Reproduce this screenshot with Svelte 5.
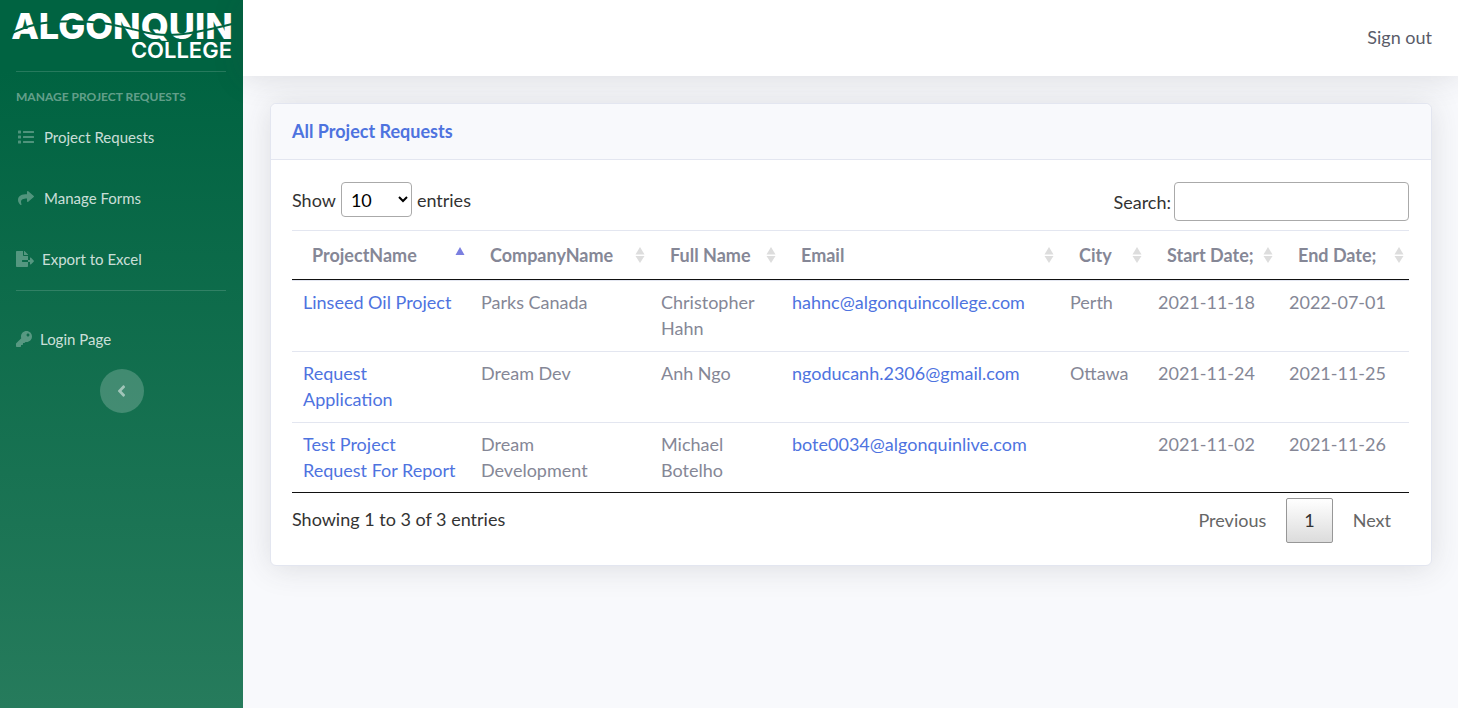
<script>
  const icons = {
    list: { w: 512, d: 'M80 368H16a16 16 0 0 0-16 16v64a16 16 0 0 0 16 16h64a16 16 0 0 0 16-16v-64a16 16 0 0 0-16-16zm0-320H16A16 16 0 0 0 0 64v64a16 16 0 0 0 16 16h64a16 16 0 0 0 16-16V64a16 16 0 0 0-16-16zm0 160H16a16 16 0 0 0-16 16v64a16 16 0 0 0 16 16h64a16 16 0 0 0 16-16v-64a16 16 0 0 0-16-16zm416 176H176a16 16 0 0 0-16 16v32a16 16 0 0 0 16 16h320a16 16 0 0 0 16-16v-32a16 16 0 0 0-16-16zm0-320H176a16 16 0 0 0-16 16v32a16 16 0 0 0 16 16h320a16 16 0 0 0 16-16V80a16 16 0 0 0-16-16zm0 160H176a16 16 0 0 0-16 16v32a16 16 0 0 0 16 16h320a16 16 0 0 0 16-16v-32a16 16 0 0 0-16-16z' },
    share: { w: 512, d: 'M503.691 189.836L327.687 37.851C312.281 24.546 288 35.347 288 56.015v80.053C127.371 137.907 0 170.1 0 322.326c0 61.441 39.581 122.309 83.333 154.132 13.653 9.931 33.111-2.533 28.077-18.631C66.066 312.814 132.917 274.316 288 272.085V360c0 20.7 24.3 31.453 39.687 18.164l176.004-152c11.071-9.562 11.086-26.753 0-36.328z' },
    fileExport: { w: 576, d: 'M384 121.9c0-6.3-2.5-12.4-7-16.9L279.1 7c-4.5-4.5-10.6-7-17-7H256v128h128zM571 308l-95.7-96.4c-10.1-10.1-27.4-3-27.4 11.3V288h-64v64h64v65.2c0 14.3 17.3 21.4 27.4 11.3L571 332c6.6-6.6 6.6-17.4 0-24zm-379 28v-32c0-8.8 7.2-16 16-16h176V160H248c-13.2 0-24-10.8-24-24V0H24C10.7 0 0 10.7 0 24v464c0 13.3 10.7 24 24 24h336c13.3 0 24-10.7 24-24V352H208c-8.8 0-16-7.2-16-16z' },
    key: { w: 512, d: 'M512 176.001C512 273.203 433.202 352 336 352c-11.22 0-22.19-1.062-32.827-3.069l-24.012 27.014A23.999 23.999 0 0 1 261.223 384H224v40c0 13.255-10.745 24-24 24h-40v40c0 13.255-10.745 24-24 24H24c-13.255 0-24-10.745-24-24v-78.059c0-6.365 2.529-12.47 7.029-16.971l161.802-161.802C163.108 213.814 160 195.271 160 176 160 78.798 238.797.001 335.999 0 433.488-.001 512 78.511 512 176.001zM336 128c0 26.51 21.49 48 48 48s48-21.49 48-48-21.49-48-48-48-48 21.49-48 48z' }
  };

  const columns = ['ProjectName', 'CompanyName', 'Full Name', 'Email', 'City', 'Start Date;', 'End Date;'];
  const widths = [178, 180, 131, 278, 88, 131, 131];
  const total = widths.reduce((a, b) => a + b, 0);

  const rows = [
    { project: 'Linseed Oil Project', company: 'Parks Canada', name: 'Christopher Hahn', email: 'hahnc@algonquincollege.com', city: 'Perth', start: '2021-11-18', end: '2022-07-01' },
    { project: 'Request Application', company: 'Dream Dev', name: 'Anh Ngo', email: 'ngoducanh.2306@gmail.com', city: 'Ottawa', start: '2021-11-24', end: '2021-11-25' },
    { project: 'Test Project Request For Report', company: 'Dream Development', name: 'Michael Botelho', email: 'bote0034@algonquinlive.com', city: '', start: '2021-11-02', end: '2021-11-26' }
  ];
</script>

{#snippet navLink(icon, label, cls)}
  <a class="nav-link {cls}" href="#top">
    <svg class="icon" viewBox="0 0 {icons[icon].w} 512" aria-hidden="true"><path d={icons[icon].d} /></svg>
    <span>{label}</span>
  </a>
{/snippet}

<div class="page">
  <nav class="sidebar">
    <a class="brand" href="#top" aria-label="Algonquin College">
      <svg viewBox="0 0 243 71">
        <text class="logo-main" x="122" y="39" text-anchor="middle">ALGONQUIN</text>
        <path class="cut" d="M8 35C30 24 45 22 62 21.500C95 20 115 25 140 31C165 38 185 36 236 23" />
        <text class="logo-sub" x="232" y="58" text-anchor="end">COLLEGE</text>
      </svg>
    </a>
    <hr />
    <h2>Manage Project Requests</h2>
    {@render navLink('list', 'Project Requests', 'inset')}
    {@render navLink('share', 'Manage Forms', 'inset')}
    {@render navLink('fileExport', 'Export to Excel', '')}
    <hr class="second" />
    {@render navLink('key', 'Login Page', '')}
    <button class="toggle" aria-label="Collapse sidebar">
      <svg viewBox="0 0 256 512"><path d="M31.7 239l136-136c9.4-9.4 24.6-9.4 33.9 0l22.6 22.6c9.4 9.4 9.4 24.6 0 33.9L127.9 256l96.4 96.4c9.4 9.4 9.4 24.6 0 33.9L201.7 409c-9.4 9.4-24.6 9.4-33.9 0l-136-136c-9.5-9.4-9.5-24.6-.1-34z" /></svg>
    </button>
  </nav>

  <div class="content">
    <header><a href="#top">Sign out</a></header>
    <main>
      <section class="card">
        <h1>All Project Requests</h1>
        <div class="card-body">
          <div class="controls">
            <label class="length">Show
              <select><option>10</option><option>25</option><option>50</option><option>100</option></select>
              entries</label>
            <label class="search">Search:<input type="search" /></label>
          </div>
          <table>
            <colgroup>
              {#each widths as w}<col style="width: {(w / total) * 100}%" />{/each}
            </colgroup>
            <thead>
              <tr>
                {#each columns as c, i}
                  <th scope="col" aria-sort={i === 0 ? 'ascending' : undefined}>
                    <div class="head">
                      <span>{c}</span>
                      {#if i === 0}
                        <svg class="sort" viewBox="0 0 10 17"><path class="active" d="M5 0L9.500 8H.5z" /></svg>
                      {:else}
                        <svg class="sort" viewBox="0 0 10 17"><path d="M5 0L9.500 7.500H.5z" /><path d="M5 16L.5 9H9.500z" /></svg>
                      {/if}
                    </div>
                  </th>
                {/each}
              </tr>
            </thead>
            <tbody>
              {#each rows as r}
                <tr>
                  <td><a href="#top">{r.project}</a></td>
                  <td>{r.company}</td>
                  <td>{r.name}</td>
                  <td><a href="mailto:{r.email}">{r.email}</a></td>
                  <td>{r.city}</td>
                  <td>{r.start}</td>
                  <td>{r.end}</td>
                </tr>
              {/each}
            </tbody>
          </table>
          <div class="footer">
            <div class="info">Showing 1 to 3 of 3 entries</div>
            <div class="pager">
              <button>Previous</button>
              <button class="current">1</button>
              <button>Next</button>
            </div>
          </div>
        </div>
      </section>
    </main>
  </div>
</div>

<style>
  :global(body) { margin: 0; }
  .page, .page * { box-sizing: border-box; }
  .page {
    display: flex;
    min-height: 100vh;
    font-family: Lato, "Open Sans", sans-serif;
    font-size: 18px;
    line-height: 26px;
    color: #858796;
    background: #f8f9fc;
  }
  a { color: #4e73df; text-decoration: none; }
  .sidebar {
    flex: 0 0 243px;
    display: flex;
    flex-direction: column;
    background: linear-gradient(180deg, #006341 10%, #267b5c 100%);
  }
  .brand { display: block; height: 71px; }
  .brand svg { display: block; width: 243px; height: 71px; }
  .logo-main { font-family: Inter, sans-serif; font-weight: 800; font-size: 36px; fill: #fff; }
  .logo-sub { font-family: Inter, sans-serif; font-weight: 600; font-size: 22px; fill: #fff; }
  .cut { fill: none; stroke: #006341; stroke-width: 2; }
  hr { width: calc(100% - 33px); height: 1px; margin: 0 16px; border: 0; background: rgba(255, 255, 255, .15); }
  .second { margin-top: 1px; }
  h2 {
    margin: 17px 16px 0;
    font-size: 12px;
    line-height: 16px;
    font-weight: 700;
    text-transform: uppercase;
    color: rgba(255, 255, 255, .4);
  }
  .nav-link {
    display: flex;
    align-items: center;
    gap: 8px;
    height: 61px;
    padding: 0 16px;
    font-size: 15px;
    line-height: 24px;
    color: rgba(255, 255, 255, .8);
  }
  .inset { padding-left: 18px; gap: 10px; }
  h2 + .nav-link { margin-top: 1px; }
  .icon { height: 16px; fill: rgba(255, 255, 255, .3); }
  .second + .nav-link { margin-top: 17px; }
  .toggle {
    display: grid;
    place-items: center;
    width: 44px;
    height: 44px;
    margin: 0 auto;
    padding: 0;
    border: 0;
    border-radius: 50%;
    background: rgba(255, 255, 255, .2);
  }
  .toggle svg { height: 18px; fill: rgba(255, 255, 255, .5); }

  .content { flex: 1; min-width: 0; }
  header {
    display: flex;
    align-items: center;
    justify-content: flex-end;
    height: 76px;
    padding: 0 26px 2px;
    background: #fff;
    box-shadow: 0 2px 31px rgba(58, 59, 69, .15);
  }
  header a { color: #5a5c69; }
  main { padding: 27px 26px 27px 27px; }
  .card {
    background: #fff;
    border: 1px solid #e3e6f0;
    border-radius: 6px;
    box-shadow: 0 2px 31px rgba(58, 59, 69, .15);
  }
  h1 {
    margin: 0;
    padding: 14px 21px 15px;
    font-size: 18px;
    line-height: 26px;
    font-weight: 700;
    color: #4e73df;
    background: #f8f9fc;
    border-bottom: 1px solid #e3e6f0;
    border-radius: 6px 6px 0 0;
  }
  .card-body { padding: 22px 22px 22px 21px; color: #333; }
  .controls { display: flex; justify-content: space-between; align-items: flex-start; padding-bottom: 9px; }
  .length, .search { display: flex; align-items: center; }
  .length { gap: 5px; }
  .search { gap: 3px; }
  select, input {
    font: inherit;
    color: #000;
    background: transparent;
    border: 1px solid #aaa;
    border-radius: 4px;
  }
  select { width: 71px; height: 35px; padding: 0 5px; }
  input { width: 235px; height: 39px; padding: 5px; }

  table {
    width: 100%;
    table-layout: fixed;
    border-collapse: separate;
    border-spacing: 0;
    color: #858796;
    border-bottom: 1px solid #111;
  }
  th {
    padding: 11px 5px 11px 20px;
    text-align: left;
    font-weight: 700;
    border-top: 1px solid #e3e6f0;
    border-bottom: 1px solid #111;
  }
  .head { display: flex; align-items: center; justify-content: space-between; white-space: nowrap; }
  .sort { width: 10px; height: 17px; fill: #ddd; }
  .active { fill: #7b7fe0; }
  td { padding: 8px 11px 10px; vertical-align: top; border-top: 1px solid #e3e6f0; }
  tbody tr:last-child td { padding-bottom: 9px; }

  .footer { display: flex; justify-content: space-between; align-items: flex-start; padding-top: 5px; }
  .info { padding-top: 8px; }
  .pager { display: flex; gap: 2px; }
  .pager button {
    height: 45px;
    padding: 0 17px 2px;
    font: inherit;
    color: #666;
    background: transparent;
    border: 1px solid transparent;
    border-radius: 2px;
  }
  .pager .current { color: #333; border-color: #979797; background: linear-gradient(#fff, #dcdcdc); }
</style>
